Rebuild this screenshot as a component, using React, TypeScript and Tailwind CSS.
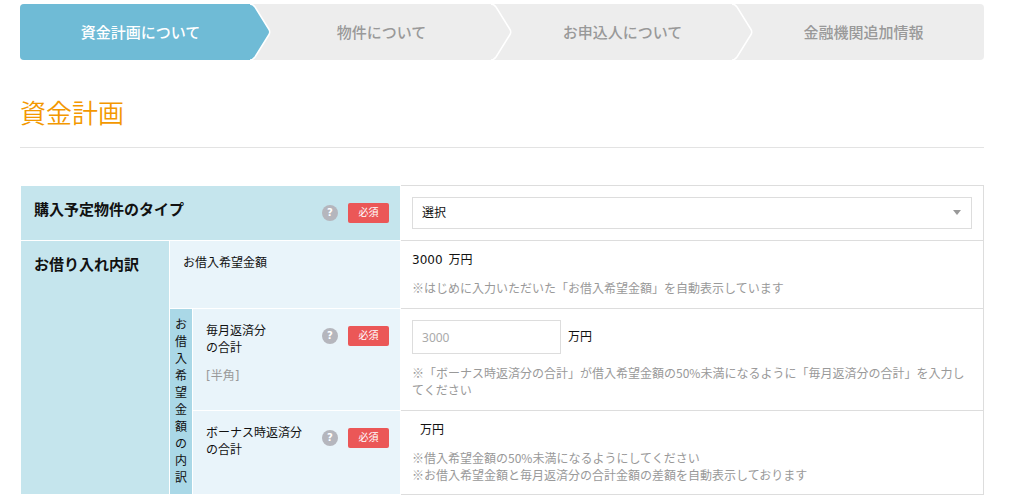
import { useState } from "react";
import type { ReactNode } from "react";

const STEPS = [
	"資金計画について",
	"物件について",
	"お申込人について",
	"金融機関追加情報",
];

function StepBar({ current }: { current: number }) {
	return (
		<ol className="flex overflow-hidden rounded bg-[#ededed] text-[15px] font-medium leading-5">
			{STEPS.map((step, i) => {
				const active = i === current;
				return (
					<li
						key={step}
						aria-current={active ? "step" : undefined}
						className={`relative flex h-14 flex-1 items-center justify-center pt-0.5 ${
							active ? "text-white" : "text-[#999]"
						}`}
					>
						{active && (
							<span className="absolute inset-y-0 left-0 right-2.5 bg-[#6fbbd6]" />
						)}
						<span className="relative">{step}</span>
						{/* Arrow head, hangs over the next step */}
						{i < STEPS.length - 1 && (
							<svg
								viewBox="0 0 22 56"
								className="absolute -right-[11px] top-0 z-10 h-14 w-[22px]"
								aria-hidden="true"
							>
								<path
									d="M0 0C2.5 0 3.5 1 5 3L19 25.5Q20.5 28 19 30.5L5 53C3.5 55 2.5 56 0 56Z"
									fill={active ? "#6fbbd6" : "#ededed"}
								/>
								<path
									d="M0 0C2.5 0 3.5 1 5 3L19 25.5Q20.5 28 19 30.5L5 53C3.5 55 2.5 56 0 56"
									fill="none"
									stroke="#fff"
									strokeWidth="1.5"
								/>
							</svg>
						)}
					</li>
				);
			})}
		</ol>
	);
}

function RequiredMarks() {
	return (
		<div className="mt-[3px] flex shrink-0 items-center gap-2.5">
			<button
				type="button"
				aria-label="ヘルプ"
				className="flex h-4 w-4 cursor-pointer items-center justify-center rounded-full bg-[#b5b6bd] text-[10px] font-bold leading-4 text-white"
			>
				?
			</button>
			<span className="h-5 w-[41px] rounded-xs bg-[#eb5757] text-center text-[10px] leading-5 text-white">
				必須
			</span>
		</div>
	);
}

function Label({ htmlFor, children }: { htmlFor: string; children: ReactNode }) {
	return (
		<div className="flex items-start justify-between">
			<label htmlFor={htmlFor}>{children}</label>
			<RequiredMarks />
		</div>
	);
}

function Note({ children }: { children: ReactNode }) {
	return (
		<p className="mt-2.5 font-['Noto_Sans_CJK_JP',sans-serif] text-[#999]">{children}</p>
	);
}

const th = "border-b border-r border-white pt-3.5 pl-[13px] pr-[11px] text-left align-top font-normal";
const td = "border-b border-r border-[#ddd] p-[11px] align-top";

export default function App() {
	const [type, setType] = useState("");
	const [monthly, setMonthly] = useState("");

	return (
		<main className="bg-white pt-1 pr-10 pl-5 font-['DejaVu_Sans','Noto_Sans_CJK_JP',sans-serif] text-xs leading-[17px] text-[#111]">
			<StepBar current={0} />

			<h1 className="mt-9 border-b border-[#e3e3e3] pb-[15px] text-[26px] leading-9 font-[350] text-[#f39800]">
				資金計画
			</h1>

			<table className="mt-[37px] w-full table-fixed border-separate border-spacing-0">
				<colgroup>
					<col className="w-[150px]" />
					<col className="w-[23px]" />
					<col className="w-[208px]" />
					<col />
				</colgroup>
				<tbody>
					<tr>
						<th scope="row" colSpan={3} className={`${th} border-t border-l bg-[#c5e5ed]`}>
							<Label htmlFor="property-type">
								<span className="text-[15px] leading-5 font-bold">購入予定物件のタイプ</span>
							</Label>
						</th>
						<td className={`${td} border-t`}>
							<div className="relative">
								<select
									id="property-type"
									value={type}
									onChange={(e) => setType(e.target.value)}
									className="block h-8 w-full appearance-none border border-[#ddd] bg-white pr-8 pl-[9px]"
								>
									<option value="">選択</option>
								</select>
								<svg
									viewBox="0 0 8 5"
									className="pointer-events-none absolute top-[13px] right-[11px] h-[5px] w-2"
									aria-hidden="true"
								>
									<path d="M0 0H8L4 5Z" fill="#999" />
								</svg>
							</div>
						</td>
					</tr>

					<tr className="h-[68px]">
						<th
							scope="rowgroup"
							rowSpan={3}
							className={`${th} border-l bg-[#c5e5ed] text-[15px] leading-5`}
						>
							<span className="font-bold">お借り入れ内訳</span>
						</th>
						<th scope="row" colSpan={2} className={`${th} bg-[#e9f4fa]`}>
							お借入希望金額
						</th>
						<td className={td}>
							<p>
								3000<span className="ml-1.5">万円</span>
							</p>
							<Note>※はじめに入力いただいた「お借入希望金額」を自動表示しています</Note>
						</td>
					</tr>

					<tr className="h-[102px]">
						<th
							scope="rowgroup"
							rowSpan={2}
							className="border-r border-b border-white bg-[#aad8e7] px-1 align-middle font-normal break-all"
						>
							お借入希望金額の内訳
						</th>
						<th scope="row" className={`${th} bg-[#e9f4fa]`}>
							<Label htmlFor="monthly">
								毎月返済分
								<br />
								の合計
								<span className="mt-[11px] block text-[#999]">[半角]</span>
							</Label>
						</th>
						<td className={td}>
							<div className="flex items-center gap-[7px]">
								<input
									id="monthly"
									type="text"
									inputMode="numeric"
									placeholder="3000"
									value={monthly}
									onChange={(e) => setMonthly(e.target.value)}
									className="h-[34px] w-[149px] border border-[#ddd] bg-white px-[9px] font-['Noto_Sans',sans-serif] placeholder:text-[#aaa]"
								/>
								<span>万円</span>
							</div>
							<Note>
								※「ボーナス時返済分の合計」が借入希望金額の50%未満になるように「毎月返済分の合計」を入力してください
							</Note>
						</td>
					</tr>

					<tr>
						<th scope="row" className={`${th} bg-[#e9f4fa]`}>
							<Label htmlFor="bonus">
								ボーナス時返済分
								<br />
								の合計
							</Label>
						</th>
						<td className={td}>
							<output id="bonus" className="block pl-2">
								万円
							</output>
							<Note>
								※借入希望金額の50%未満になるようにしてください
								<br />
								※お借入希望金額と毎月返済分の合計金額の差額を自動表示しております
							</Note>
						</td>
					</tr>
				</tbody>
			</table>
		</main>
	);
}
